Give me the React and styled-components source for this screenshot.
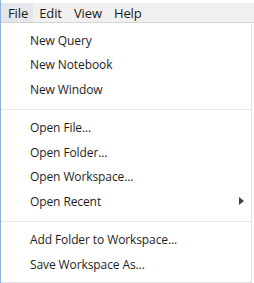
import React from "react";
import styled, { createGlobalStyle } from "styled-components";

const Global = createGlobalStyle`
  html, body { margin: 0; padding: 0; background: #ffffff; }
  body { width: 254px; height: 283px; overflow: hidden; font-family: "Open Sans", "Noto Sans", sans-serif; }
`;

const Window = styled.div`
  width: 254px;
  height: 283px;
  box-sizing: border-box;
  border-left: 1px solid #8fb2dc;
  padding-top: 3px;
  background: #ffffff;
  display: flex;
  flex-direction: column;
`;

const MenuBar = styled.div`
  height: 19px;
  background: #f0f0f0;
  border-bottom: 1px solid #d4d4d4;
  display: flex;
  align-items: center;
`;

const BarItem = styled.div`
  height: 100%;
  display: flex;
  align-items: center;
  padding: 1px ${(p) => p.$right ?? 6}px 0 ${(p) => p.$left ?? 6}px;
  box-sizing: border-box;
  font-size: 13px;
  color: #1b1b1b;
  background: ${(p) => (p.$active ? "#e3e6ea" : "transparent")};
  letter-spacing: -0.1px;
`;

const Dropdown = styled.div`
  flex: 1;
  width: 251px;
  box-sizing: border-box;
  border-right: 1px solid #e6e6e6;
  border-bottom: 1px solid #e2e2e2;
  padding-top: 5px;
  display: flex;
  flex-direction: column;
`;

const Item = styled.div`
  height: 24.5px;
  display: flex;
  align-items: center;
  padding-left: 29px;
  padding-right: 7px;
  font-size: 12px;
  color: #1e1e1e;
  letter-spacing: -0.1px;
`;

const Label = styled.span`
  flex: 1;
`;

const Arrow = styled.span`
  width: 0;
  height: 0;
  border-top: 4px solid transparent;
  border-bottom: 4px solid transparent;
  border-left: 5px solid #404040;
`;

const Separator = styled.div`
  height: 1px;
  background: #e8e8e8;
  margin: 7px 0 6px 0;
`;

const groups = [
  ["New Query", "New Notebook", "New Window"],
  ["Open File...", "Open Folder...", "Open Workspace...", { label: "Open Recent", sub: true }],
  ["Add Folder to Workspace...", "Save Workspace As..."],
];

export default function App() {
  return (
    <>
      <Global />
      <Window>
        <MenuBar>
          <BarItem $active $left={7} $right={5}>File</BarItem>
          <BarItem>Edit</BarItem>
          <BarItem>View</BarItem>
          <BarItem>Help</BarItem>
        </MenuBar>
        <Dropdown>
          {groups.map((g, gi) => (
            <React.Fragment key={gi}>
              {gi > 0 && <Separator />}
              {g.map((it) => {
                const label = typeof it === "string" ? it : it.label;
                const sub = typeof it !== "string" && it.sub;
                return (
                  <Item key={label}>
                    <Label>{label}</Label>
                    {sub && <Arrow />}
                  </Item>
                );
              })}
            </React.Fragment>
          ))}
        </Dropdown>
      </Window>
    </>
  );
}
